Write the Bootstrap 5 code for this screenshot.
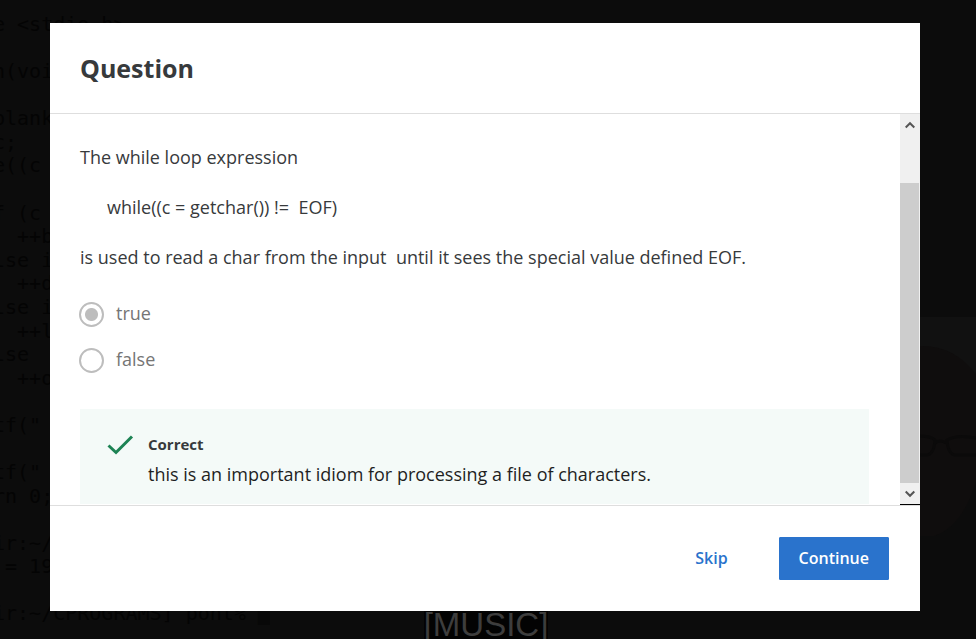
<!DOCTYPE html>
<html lang="en">
<head>
<meta charset="utf-8">
<meta name="viewport" content="width=device-width, initial-scale=1">
<title>Question</title>
<link href="https://cdn.jsdelivr.net/npm/bootstrap@5.3.0/dist/css/bootstrap.min.css" rel="stylesheet">
<style>
body { background: #0c0c0c; font-family: "Open Sans", "Noto Sans", sans-serif; font-size: 18px; line-height: 26px; color: #373a3c; }
.backdrop-code { z-index: 0; display: grid; grid-template-rows: repeat(26, minmax(0, 1fr)); padding: 12px 0 14px; margin: 0 0 0 -7px; font: 20px/24px "DejaVu Sans Mono", monospace; color: #040404; white-space: pre; overflow: hidden; }
.backdrop-code span { height: 24px; }
.backdrop-code i { color: #080808; font-style: normal; }
.speaker { z-index: 0; right: 0; top: 317px; width: 58px; height: 225px; }
.caption-line { z-index: 1; left: 0; right: 0; bottom: -5px; font: 33px/38px "Liberation Sans", Arial, sans-serif; color: #3d3d3d; text-align: center; padding-right: 4px; }
.caption-line span { background: #030303; }
.stage { z-index: 2; padding: 23px 56px 28px 50px; }
.question-head { padding: 30px; border-bottom: 1px solid #dedede; }
.question-head h1 { font-size: 25px; line-height: 30px; font-weight: 700; }
.question-scroll { min-height: 0; }
.question-body { padding: 30px 31px 0 30px; overflow: hidden; margin-bottom: 1px; }
.question-body p { margin-bottom: 24px; }
.code-sample { padding-left: 27px; }
.choices { gap: 19px; padding-top: 6px; margin-bottom: 36px; color: #757575; }
.choices label { gap: 12px; margin-left: -1px; }
.choices input { appearance: none; width: 25px; height: 25px; margin: 2px 0 0; border: 2px solid #bdbdbd; border-radius: 50%; background: #fff; }
.choices input:checked { background: radial-gradient(circle, #bdbdbd 6px, #fff 7px); }
.feedback { background: #f4faf8; padding: 22px 27px 40px; gap: 14px; color: #1f1f1f; }
.feedback strong { font-size: 15px; color: #373a3c; }
.feedback svg { margin-top: 4px; }
.feedback-copy { gap: 4px; }
.scroll-rail { width: 20px; background: #f0f0f0; border-bottom: 1px solid #000; }
.scroll-rail button { height: 21px; }
.scroll-space { flex: 48 1 0; }
.scroll-thumb { flex: 300 1 0; background: #cdcdcd; margin-right: 1px; }
.question-foot { border-top: 1px solid #dedede; padding: 31px; gap: 31px; }
.question-foot .btn { font-size: 16px; line-height: 23px; font-weight: 600; padding: 9px 19px; border-radius: 1px; }
.btn-skip { color: #2a73cc; }
.btn-continue { background: #2a73cc; border-color: #2a73cc; color: #fff; }
</style>
<script src="https://cdn.jsdelivr.net/npm/bootstrap@5.3.0/dist/js/bootstrap.bundle.min.js"></script>
</head>
<body class="position-relative vh-100 overflow-hidden">
<div class="backdrop-code position-absolute top-0 start-0 h-100" aria-hidden="true"><span>e &lt;stdio.h&gt;</span><span></span><span>n(void)</span><span></span><span>blanks</span><span>c;</span><span>e((c</span><span></span><span>f (c</span><span>  ++b</span><span>lse if</span><span>  ++d</span><span>lse if</span><span>  ++l</span><span>lse</span><span>  ++o</span><span></span><span>tf("</span><span></span><span>tf("</span><span>rn 0;</span><span></span><span>ir:~/</span><span> = 19</span><span></span><span>ir:~/CPROGRAMS] pont% <i>█</i></span></div>
<svg class="speaker position-absolute" viewBox="0 0 58 225" preserveAspectRatio="none" aria-hidden="true">
  <path d="M0 0H58V165Q44 210 16 219H0Z" fill="#0f0d0d"/>
  <path d="M0 29Q35 27 58 57V0H0Z" fill="#111"/>
  <path d="M0 119Q13 119 17 123Q16 138 8 138H0M17 126Q22 122 28 126M58 121Q39 117 29 123Q30 138 38 138H58" fill="none" stroke="#0b0a0a" stroke-width="3"/>
</svg>
<div class="caption-line position-absolute"><span>[MUSIC]</span></div>
<main class="stage position-relative h-100 d-flex">
  <section class="bg-white w-100 d-flex flex-column" role="dialog" aria-labelledby="dialog-title">
    <header class="question-head"><h1 id="dialog-title" class="m-0">Question</h1></header>
    <div class="question-scroll d-flex flex-grow-1 overflow-hidden">
      <div class="question-body flex-grow-1">
        <p>The while loop expression</p>
        <p class="code-sample">while((c = getchar()) !=&nbsp; EOF)</p>
        <p>is used to read a char from the input&nbsp; until it sees the special value defined EOF.</p>
        <div class="choices d-flex flex-column" role="radiogroup" aria-label="Answer">
          <label class="d-flex" for="answer-true"><input type="radio" id="answer-true" name="answer" checked disabled>true</label>
          <label class="d-flex" for="answer-false"><input type="radio" id="answer-false" name="answer" disabled>false</label>
        </div>
        <div class="feedback d-flex align-items-start">
          <svg width="27" height="20" viewBox="0 0 27 20" fill="none" stroke="#1d8354" stroke-width="3" aria-hidden="true"><path d="M1.5 10.5L9 17.5L25 1.5"/></svg>
          <div class="feedback-copy d-flex flex-column"><strong>Correct</strong><span>this is an important idiom for processing a file of characters.</span></div>
        </div>
      </div>
      <div class="scroll-rail flex-shrink-0 d-flex flex-column">
        <button type="button" class="border-0 bg-transparent p-0 d-flex align-items-center justify-content-center" aria-label="Scroll up"><svg width="10" height="8" viewBox="0 0 10 8" fill="none" stroke="#555" stroke-width="2"><path d="M.7 6.5L5 2.2L9.3 6.5"/></svg></button>
        <div class="scroll-space"></div>
        <div class="scroll-thumb"></div>
        <button type="button" class="border-0 bg-transparent p-0 d-flex align-items-center justify-content-center" aria-label="Scroll down"><svg width="10" height="8" viewBox="0 0 10 8" fill="none" stroke="#555" stroke-width="2"><path d="M.7 1.5L5 5.8L9.3 1.5"/></svg></button>
      </div>
    </div>
    <footer class="question-foot d-flex justify-content-end">
      <button type="button" class="btn btn-skip">Skip</button>
      <button type="button" class="btn btn-continue">Continue</button>
    </footer>
  </section>
</main>
</body>
</html>
